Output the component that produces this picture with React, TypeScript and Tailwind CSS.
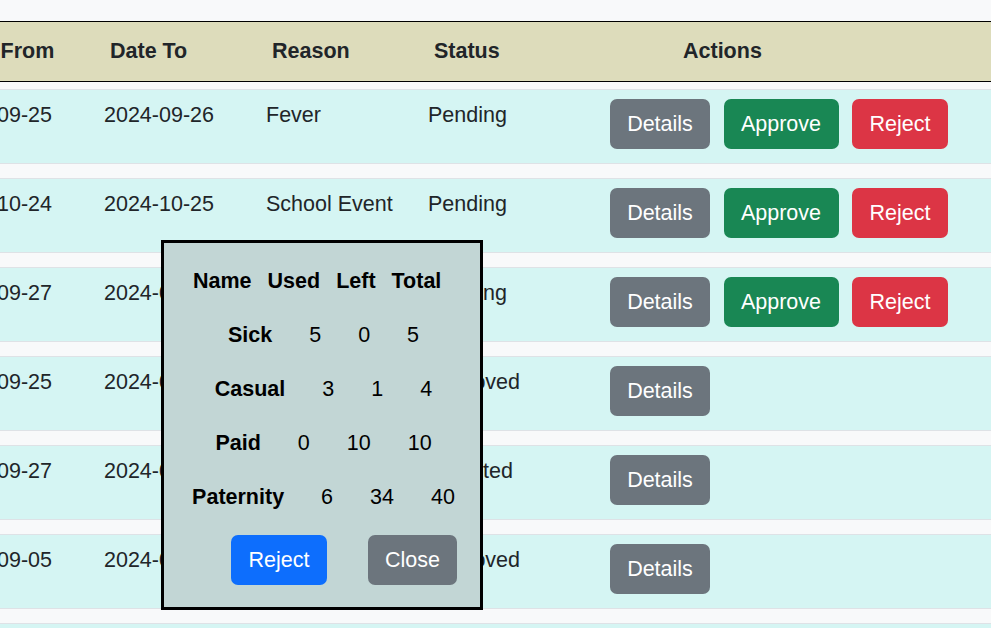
import React from "react";

type Row = { from: string; to: string; reason: string; status: string; pending: boolean };

const rows: Row[] = [
  { from: "2024-09-25", to: "2024-09-26", reason: "Fever", status: "Pending", pending: true },
  { from: "2024-10-24", to: "2024-10-25", reason: "School Event", status: "Pending", pending: true },
  { from: "2024-09-27", to: "2024-09-28", reason: "Family Trip", status: "Pending", pending: true },
  { from: "2024-09-25", to: "2024-09-26", reason: "Cold", status: "Approved", pending: false },
  { from: "2024-09-27", to: "2024-09-28", reason: "Personal", status: "Rejected", pending: false },
  { from: "2024-09-05", to: "2024-09-06", reason: "Wedding", status: "Approved", pending: false },
  { from: "2024-08-12", to: "2024-08-13", reason: "Headache", status: "Approved", pending: false },
];

const leave = [
  { name: "Sick", used: "5", left: "0", total: "5" },
  { name: "Casual", used: "3", left: "1", total: "4" },
  { name: "Paid", used: "0", left: "10", total: "10" },
  { name: "Paternity", used: "6", left: "34", total: "40" },
];

export default function App() {
  return (
    <div
      className="relative h-[628px] w-[991px] overflow-hidden bg-[#f8f9fa] text-[21.5px] text-[#212529]"
      style={{ fontFamily: '"Liberation Sans", Arial, sans-serif' }}
    >
      <div className="h-[21px]" />
      <div className="ml-[-68px] w-[1100px]">
        <div className="flex h-[61px] items-center border-y border-black bg-[#dddcbb] pb-[2px] font-bold leading-[32px]">
          <div className="w-[162px] pl-[16px]">Date From</div>
          <div className="w-[162px] pl-[16px]">Date To</div>
          <div className="w-[162px] pl-[16px]">Reason</div>
          <div className="w-[162px] pl-[16px]">Status</div>
          <div className="pl-[103px]">Actions</div>
        </div>
        <div className="mt-[7px] flex flex-col gap-[14px]">
          {rows.map((r, i) => (
            <div
              key={i}
              className="flex h-[75px] items-start border-y border-[#dee2e6] bg-[#d5f5f3] leading-[32px]"
            >
              <div className="w-[162px] pl-[10px] pt-[9px]">{r.from}</div>
              <div className="w-[162px] pl-[10px] pt-[9px]">{r.to}</div>
              <div className="w-[162px] pl-[10px] pt-[9px]">{r.reason}</div>
              <div className="w-[162px] pl-[10px] pt-[9px]">{r.status}</div>
              <div className="flex gap-[13.5px] pl-[30px] pt-[9px]">
                <button className="h-[50px] w-[100px] rounded-[7px] bg-[#6c757d] text-center leading-[32px] text-white">
                  Details
                </button>
                {r.pending && (
                  <>
                    <button className="h-[50px] w-[115px] rounded-[7px] bg-[#198754] text-center leading-[32px] text-white">
                      Approve
                    </button>
                    <button className="h-[50px] w-[96px] rounded-[7px] bg-[#dc3545] text-center leading-[32px] text-white">
                      Reject
                    </button>
                  </>
                )}
              </div>
            </div>
          ))}
        </div>
      </div>

      <div className="absolute left-[161px] top-[240px] h-[370px] w-[322px] border-[3px] border-black bg-[#c2d6d5] text-black">
        <div className="flex flex-col gap-[22px] pt-[22px] leading-[32px]">
          <div className="flex gap-[16px] pl-[29px] font-bold">
            <span>Name</span>
            <span>Used</span>
            <span>Left</span>
            <span>Total</span>
          </div>
          {leave.map((l) => (
            <div key={l.name} className="flex justify-center gap-[37px] pl-[3px]">
              <span className="font-bold">{l.name}</span>
              <span>{l.used}</span>
              <span>{l.left}</span>
              <span>{l.total}</span>
            </div>
          ))}
        </div>
        <div className="mt-[22px] flex gap-[41px] pl-[67px]">
          <button className="h-[50px] w-[96px] rounded-[7px] bg-[#0d6efd] text-center leading-[32px] text-white">
            Reject
          </button>
          <button className="h-[50px] w-[89px] rounded-[7px] bg-[#6c757d] text-center leading-[32px] text-white">
            Close
          </button>
        </div>
      </div>
    </div>
  );
}
